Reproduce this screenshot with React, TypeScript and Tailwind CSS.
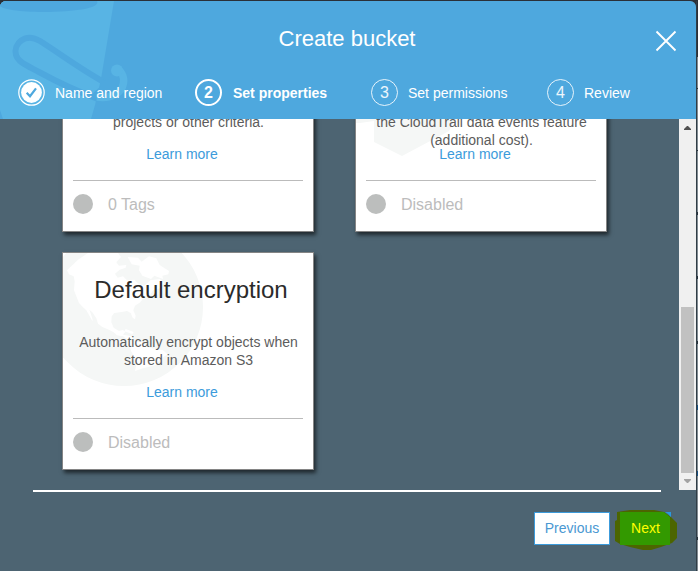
import React from "react";

function HexArt() {
  return (
    <svg className="absolute left-0 top-0" width="140" height="141" viewBox="0 0 140 141" fill="#f5f7f6">
      <path d="M0 108V20L40 0H80L120 20V92L98 106L93 116L46 141L18 127V106L4 108Z" />
    </svg>
  );
}

function GlobeArt() {
  return (
    <svg className="absolute left-0 top-0" width="141" height="134" viewBox="0 0 423 402">
      <circle cx="183" cy="162" r="237" fill="#f5f7f6" />
      <path
        fill="#ffffff"
        d="M75 0L45 20L12 52L18 64L32 70L35 85L33 112L40 130L48 150L60 163L70 172L86 200L90 204L84 184L79 170L88 178L100 196L105 212L118 222L138 230L152 238L162 247L180 250L196 262L212 262L208 250L180 245L187 236L180 231L168 234L152 224L145 208L146 190L154 180L176 177L192 174L203 180L209 194L216 199L218 188L211 172L216 158L232 148L243 133L262 125L270 112L292 105L304 90L290 78L262 82L244 98L226 92L214 80L192 82L180 70L164 74L156 62L170 50L188 44L190 36L168 38L160 28L174 12L165 0Z"
      />
      <path fill="#ffffff" d="M194 12L225 14L236 26L258 10L280 16L290 36L318 54L316 64L298 68L300 78L274 68L264 78L238 68L228 52L230 38L206 34Z" />
      <path fill="#ffffff" d="M198 264L236 268L260 284L300 292L314 304L292 318L280 336L240 346L216 354L222 324L204 294Z" />
      <path fill="#ffffff" d="M188 228L212 237L208 243L184 235Z" />
    </svg>
  );
}

function Card({ title, text, status, art }: { title?: string; text: React.ReactNode; status: string; art?: React.ReactNode }) {
  return (
    <section className="relative h-[218px] w-[252px] border border-[#858585] bg-white px-[10px] shadow-[2px_3px_4px_rgba(0,0,0,0.6)]">
      {art}
      <div className="relative flex h-full flex-col">
        <h2 className="mt-[22px] h-[30px] whitespace-nowrap pl-[6px] text-center text-[24px] leading-[30px] text-[#2b2b2b]">{title}</h2>
        <p className="mt-[28px] h-[50px] whitespace-nowrap pl-px text-center text-[14px] leading-[18px] text-[#5c5c5c]">{text}</p>
        <div className="h-[18px] pr-[12px] text-center text-[14px] leading-[18px] text-[#3c9bdb]">Learn more</div>
        <div className="mt-[17px] h-px bg-[#bbbbbb]" />
        <div className="mt-[13px] flex items-start gap-[15px]">
          <span className="size-5 rounded-full bg-[#bcbebd]" />
          <span className="pt-px text-[16px] leading-5 text-[#bcbcbc]">{status}</span>
        </div>
      </div>
    </section>
  );
}

function BucketArt() {
  return (
    <svg className="absolute left-0 top-0" width="140" height="118" viewBox="0 1 140 118" fill="none">
      <path d="M0 1H114L101 79L95 105L91 119H3L0 110Z" fill="#58b4e4" />
      <path d="M0 1H97C101 8 75 12 43 12C20 12 2 9 0 6Z" fill="#4ea8de" />
      <path
        d="M104 82C82 70 62 55 40 41C25 32 13 44 16 55C18 62 26 65 39 72C61 84 76 91 98 99"
        stroke="#4ea8de"
        strokeWidth="6"
      />
      <path d="M101 79C107 82 111 80 111 72L121 74L118 91L105 99L95 100L92 94L101 86Z" fill="#4ea8de" />
      <path d="M97 97C112 99 122 93 123.500 83C124.500 76 121 71 117 69" stroke="#58b4e4" strokeWidth="7.500" />
      <circle cx="117" cy="70.500" r="6" fill="#58b4e4" />
    </svg>
  );
}

function Step({ n, label, state }: { n: number; label: string; state?: "done" | "active" }) {
  return (
    <li className={state === "done" ? "flex w-[177px] shrink-0 items-center" : "flex w-[176px] shrink-0 items-center"}>
      {state === "done" ? (
        <svg width="27" height="27" viewBox="0 0 27 27" fill="none">
          <circle cx="13.5" cy="13.5" r="12.7" stroke="white" strokeWidth="1.2" />
          <circle cx="13.5" cy="13.5" r="10.4" fill="white" />
          <path d="M8.7 13.8L12 17.2L18 9.4" stroke="#4ea8de" strokeWidth="2.2" />
        </svg>
      ) : (
        <span
          className={
            state === "active"
              ? "flex size-[27px] items-center justify-center rounded-full border-2 border-white pt-px text-[16px] font-bold leading-none"
              : "flex size-[27px] items-center justify-center rounded-full border border-white/85 pt-px text-[16px] leading-none text-white/90"
          }
        >
          {n}
        </span>
      )}
      <span className={state === "active" ? "ml-[11px] whitespace-nowrap font-bold" : "ml-[10px] whitespace-nowrap"}>{label}</span>
    </li>
  );
}

export default function App() {
  return (
    <div className="flex h-[571px] w-[698px] overflow-hidden bg-[#2a3038] pt-px font-['Liberation_Sans',Arial,sans-serif]">
      <main className="flex w-[696px] shrink-0 flex-col overflow-hidden rounded-t-[6px] bg-[#4d6472]">
        <header className="relative h-[118px] shrink-0 bg-[#4ea8de] text-white">
          <BucketArt />
          <div className="relative flex h-[78px] items-center justify-center">
            <h1 className="mb-[2px] mr-[2px] text-[22px] leading-[30px]">Create bucket</h1>
            <svg className="absolute right-[19px] top-[29px]" width="22" height="22" viewBox="0 0 22 22" stroke="white" strokeWidth="1.9">
              <path d="M1.5 1.5L20.5 20.5M20.5 1.5L1.5 20.5" />
            </svg>
          </div>
          <ol className="relative flex pl-[18px] text-[14px] leading-[18px]">
            <Step n={1} label="Name and region" state="done" />
            <Step n={2} label="Set properties" state="active" />
            <Step n={3} label="Set permissions" />
            <Step n={4} label="Review" />
          </ol>
        </header>

        <div className="flex h-[371px] shrink-0 overflow-hidden">
          <div className="w-[679px] pl-[62px]">
            <div className="-mt-[105px] grid grid-cols-[252px_252px] gap-x-[41px] gap-y-5">
              <Card text={<><br />projects or other criteria.</>} status="0 Tags" />
              <Card
                text={<><br />the CloudTrail data events feature<br />(additional cost).</>}
                status="Disabled"
                art={<HexArt />}
              />
              <Card
                title="Default encryption"
                text={<>Automatically encrypt objects when<br />stored in Amazon S3</>}
                status="Disabled"
                art={<GlobeArt />}
              />
            </div>
          </div>
          <div className="flex w-[17px] flex-col items-center bg-[#f0f0f0]">
            <svg className="mt-[7px] shrink-0" width="7" height="4" viewBox="0 0 7 4" fill="#505050">
              <path d="M0 4V3L3 0H4L7 3V4Z" />
            </svg>
            <div className="mt-[177px] h-[166px] w-[13px] shrink-0 bg-[#c1c1c1]" />
            <svg className="mt-[6px] shrink-0" width="7" height="4" viewBox="0 0 7 4" fill="#a3a3a3">
              <path d="M0 0V1L3 4H4L7 1V0Z" />
            </svg>
          </div>
        </div>

        <footer className="ml-[33px] w-[644px]">
          <div className="h-[2px] w-[628px] bg-white" />
          <div className="flex justify-end gap-[10px] pt-5 text-[14px]">
            <button className="h-[33px] w-[76px] border border-[#3c9bdb] bg-white text-[#4a98d2]">Previous</button>
            <div className="relative mr-[6px] h-[33px] w-[51px]">
              <svg className="absolute -left-[5px] -top-[2px]" width="64" height="40" viewBox="0 0 64 40">
                <path d="M2 2L15 0H39L49 2L56 7L62 13V28L57 33L46 37L36 40H28L15 37L5 34L0 31V11L2 10Z" fill="#4c6500" />
                <path d="M5 2H49L55 7V35H5Z" fill="#339900" />
                <path d="M50 2H56V7L53 4Z" fill="#2b99de" />
              </svg>
              <button className="relative h-full w-full text-[#ffff00]">Next</button>
            </div>
          </div>
        </footer>
      </main>
      <aside className="flex w-[2px] shrink-0">
        <div className="w-px bg-[#303d46]" />
        <div className="mt-[56px] flex w-px flex-col justify-around bg-[#818b92]">
          <i className="h-px bg-[#26313a]" />
          <i className="h-px bg-[#26313a]" />
          <i className="h-[3px] bg-[#26313a]" />
          <i className="h-[3px] bg-[#26313a]" />
          <i className="h-[3px] bg-[#26313a]" />
          <i className="h-[5px] bg-[#174f80]" />
          <i className="h-[5px] bg-[#174f80]" />
          <i className="h-[3px] bg-[#26313a]" />
        </div>
      </aside>
    </div>
  );
}
